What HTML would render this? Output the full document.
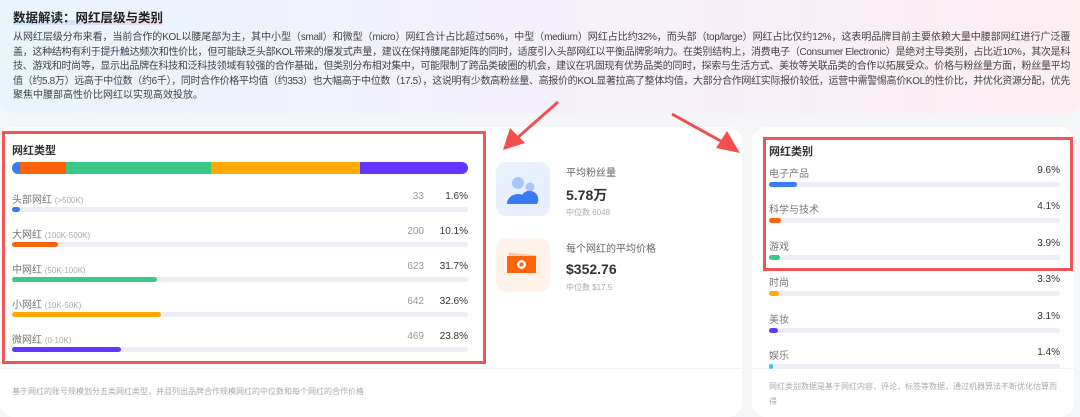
<!DOCTYPE html><html><head><meta charset="utf-8"><style>
*{margin:0;padding:0;box-sizing:border-box}
body{width:1080px;height:409px;background:#f5f6f8;font-family:"Liberation Sans","Noto Sans CJK SC",sans-serif;position:relative;overflow:hidden;color:#333}
.abs{position:absolute}
.top{left:0;top:0;width:1080px;height:113px;border-radius:0 0 12px 12px;background:linear-gradient(90deg,#eaf4fd 0%,#f4f0fb 50%,#fdeef2 100%)}
.h{left:13px;top:7px;font-size:12.5px;font-weight:bold;color:#222;background:linear-gradient(90deg,rgba(140,200,255,.35),rgba(255,170,190,.35));background-size:100% 5px;background-repeat:no-repeat;background-position:0 13px}
.p{left:13px;top:31px;width:1057px;font-size:10px;line-height:14.5px;color:#444;white-space:nowrap;letter-spacing:-0.35px}
.p span{display:block;text-align:justify;text-align-last:justify}
.card{background:#fff;border-radius:14px}
.red{border:3px solid #f25555}
.lbl{font-size:10px;color:#777}.lbl small{font-size:8px;color:#aaa}
.bar{height:5px;border-radius:3px;background:#eceef3}
.fill{height:5px;border-radius:3px}
.num{font-size:10px;color:#999;text-align:right;width:40px}
.pct{font-size:10px;color:#333;text-align:right;width:50px;font-weight:500}
</style></head><body>
<div class="abs top"></div>
<div class="abs h">数据解读：网红层级与类别</div>
<div class="abs p"><span>从网红层级分布来看，当前合作的KOL以腰尾部为主，其中小型（small）和微型（micro）网红合计占比超过56%，中型（medium）网红占比约32%，而头部（top/large）网红占比仅约12%，这表明品牌目前主要依赖大量中腰部网红进行广泛覆</span><span>盖，这种结构有利于提升触达频次和性价比，但可能缺乏头部KOL带来的爆发式声量，建议在保持腰尾部矩阵的同时，适度引入头部网红以平衡品牌影响力。在类别结构上，消费电子（Consumer Electronic）是绝对主导类别，占比近10%，其次是科</span><span>技、游戏和时尚等，显示出品牌在科技和泛科技领域有较强的合作基础，但类别分布相对集中，可能限制了跨品类破圈的机会，建议在巩固现有优势品类的同时，探索与生活方式、美妆等关联品类的合作以拓展受众。价格与粉丝量方面，粉丝量平均</span><span>值（约5.8万）远高于中位数（约6千），同时合作价格平均值（约353）也大幅高于中位数（17.5），这说明有少数高粉丝量、高报价的KOL显著拉高了整体均值，大部分合作网红实际报价较低，运营中需警惕高价KOL的性价比，并优化资源分配，优先</span><div style="letter-spacing:0">聚焦中腰部高性价比网红以实现高效投放。</div></div>

<div class="abs card" style="left:0;top:127px;width:742px;height:290px"></div>
<div class="abs" style="left:0;top:368px;width:742px;height:1px;background:#f2f3f5"></div>
<div class="abs card" style="left:752px;top:127px;width:322px;height:290px"></div>
<div class="abs" style="left:752px;top:368px;width:322px;height:1px;background:#f2f3f5"></div>

<div class="abs red" style="left:2px;top:131px;width:484px;height:233px"></div>
<div class="abs" style="left:12px;top:142px;font-size:11px;font-weight:bold;color:#333">网红类型</div>
<div class="abs" style="left:12px;top:162px;width:456px;height:12px;border-radius:6px;overflow:hidden;display:flex">
<div style="width:8px;background:#3a7af5"></div><div style="width:46px;background:#fc6409"></div><div style="width:145px;background:#3cc886"></div><div style="width:149px;background:#ffaa00"></div><div style="flex:1;background:#6236ff"></div></div>

<div class="abs lbl" style="left:12px;top:191px">头部网红 <small>(&gt;500K)</small></div><div class="abs num" style="left:384px;top:191px">33</div><div class="abs pct" style="left:418px;top:191px">1.6%</div>
<div class="abs bar" style="left:12px;top:207px;width:456px"><div class="fill" style="width:8px;background:#3a7af5"></div></div>
<div class="abs lbl" style="left:12px;top:226px">大网红 <small>(100K-500K)</small></div><div class="abs num" style="left:384px;top:226px">200</div><div class="abs pct" style="left:418px;top:226px">10.1%</div>
<div class="abs bar" style="left:12px;top:242px;width:456px"><div class="fill" style="width:46px;background:#fc6409"></div></div>
<div class="abs lbl" style="left:12px;top:261px">中网红 <small>(50K-100K)</small></div><div class="abs num" style="left:384px;top:261px">623</div><div class="abs pct" style="left:418px;top:261px">31.7%</div>
<div class="abs bar" style="left:12px;top:277px;width:456px"><div class="fill" style="width:145px;background:#3cc886"></div></div>
<div class="abs lbl" style="left:12px;top:296px">小网红 <small>(10K-50K)</small></div><div class="abs num" style="left:384px;top:296px">642</div><div class="abs pct" style="left:418px;top:296px">32.6%</div>
<div class="abs bar" style="left:12px;top:312px;width:456px"><div class="fill" style="width:149px;background:#ffaa00"></div></div>
<div class="abs lbl" style="left:12px;top:331px">微网红 <small>(0-10K)</small></div><div class="abs num" style="left:384px;top:331px">469</div><div class="abs pct" style="left:418px;top:331px">23.8%</div>
<div class="abs bar" style="left:12px;top:347px;width:456px"><div class="fill" style="width:109px;background:#6236ff"></div></div>
<div class="abs" style="left:12px;top:386px;font-size:8px;color:#aaa">基于网红的账号规模划分五类网红类型，并且列出品牌合作规模网红的中位数和每个网红的合作价格</div>

<div class="abs" style="left:496px;top:162px;width:54px;height:54px;border-radius:10px;background:#e8f0fe"></div>
<svg class="abs" style="left:506px;top:175px" width="34" height="30"><circle cx="12" cy="8" r="6" fill="#a9c6fb"/><circle cx="24" cy="12" r="4.5" fill="#a9c6fb"/><path d="M1 29 a11 10 0 0 1 22 0z" fill="#3a7af5"/><path d="M18 29 a9 9 0 0 0 -2 -9 a8 8 0 0 1 15 9z" fill="#3a7af5"/></svg>
<div class="abs" style="left:566px;top:164px;font-size:10px;color:#666">平均粉丝量</div>
<div class="abs" style="left:566px;top:185px;font-size:14px;font-weight:bold;color:#333">5.78万</div>
<div class="abs" style="left:566px;top:207px;font-size:8px;color:#aaa">中位数 6048</div>
<div class="abs" style="left:496px;top:238px;width:54px;height:54px;border-radius:10px;background:#fff2ea"></div>
<svg class="abs" style="left:506px;top:252px" width="34" height="26"><rect x="2" y="2" width="28" height="18" fill="#fdc8a6" transform="rotate(6 16 11)"/><rect x="1" y="4" width="29" height="17" fill="#fc6409"/><circle cx="15.5" cy="12.5" r="4.5" fill="#fff"/><circle cx="15.5" cy="12.5" r="2" fill="#fc6409"/></svg>
<div class="abs" style="left:566px;top:240px;font-size:10px;color:#666">每个网红的平均价格</div>
<div class="abs" style="left:566px;top:261px;font-size:14px;font-weight:bold;color:#333">$352.76</div>
<div class="abs" style="left:566px;top:282px;font-size:8px;color:#aaa">中位数 $17.5</div>

<div class="abs red" style="left:763px;top:137px;width:310px;height:134px"></div>
<div class="abs" style="left:769px;top:143px;font-size:11px;font-weight:bold;color:#333">网红类别</div>
<div class="abs lbl" style="left:769px;top:165px">电子产品</div><div class="abs pct" style="left:1010px;top:165px">9.6%</div>
<div class="abs bar" style="left:769px;top:182px;width:291px"><div class="fill" style="width:28px;background:#3a7af5"></div></div>
<div class="abs lbl" style="left:769px;top:201px">科学与技术</div><div class="abs pct" style="left:1010px;top:201px">4.1%</div>
<div class="abs bar" style="left:769px;top:218px;width:291px"><div class="fill" style="width:12px;background:#fc6409"></div></div>
<div class="abs lbl" style="left:769px;top:238px">游戏</div><div class="abs pct" style="left:1010px;top:238px">3.9%</div>
<div class="abs bar" style="left:769px;top:255px;width:291px"><div class="fill" style="width:11px;background:#3cc886"></div></div>
<div class="abs lbl" style="left:769px;top:274px">时尚</div><div class="abs pct" style="left:1010px;top:274px">3.3%</div>
<div class="abs bar" style="left:769px;top:291px;width:291px"><div class="fill" style="width:10px;background:#ffaa00"></div></div>
<div class="abs lbl" style="left:769px;top:311px">美妆</div><div class="abs pct" style="left:1010px;top:311px">3.1%</div>
<div class="abs bar" style="left:769px;top:328px;width:291px"><div class="fill" style="width:9px;background:#6236ff"></div></div>
<div class="abs lbl" style="left:769px;top:347px">娱乐</div><div class="abs pct" style="left:1010px;top:347px">1.4%</div>
<div class="abs bar" style="left:769px;top:364px;width:291px"><div class="fill" style="width:4px;background:#3ec3f5"></div></div>
<div class="abs" style="left:769px;top:379px;width:290px;font-size:8px;line-height:15px;color:#aaa">网红类别数据是基于网红内容，评论，标签等数据，通过机器算法不断优化估算而得</div>

<svg class="abs" style="left:0;top:0" width="1080" height="409">
<g stroke="#f25050" stroke-width="3" fill="#f25050">
<line x1="558" y1="102" x2="516" y2="139"/><polygon points="503,150 510,128 525,143" stroke="none"/>
<line x1="672" y1="114" x2="726" y2="144"/><polygon points="740,153 716,148 727,131" stroke="none"/>
</g></svg>
</body></html>
